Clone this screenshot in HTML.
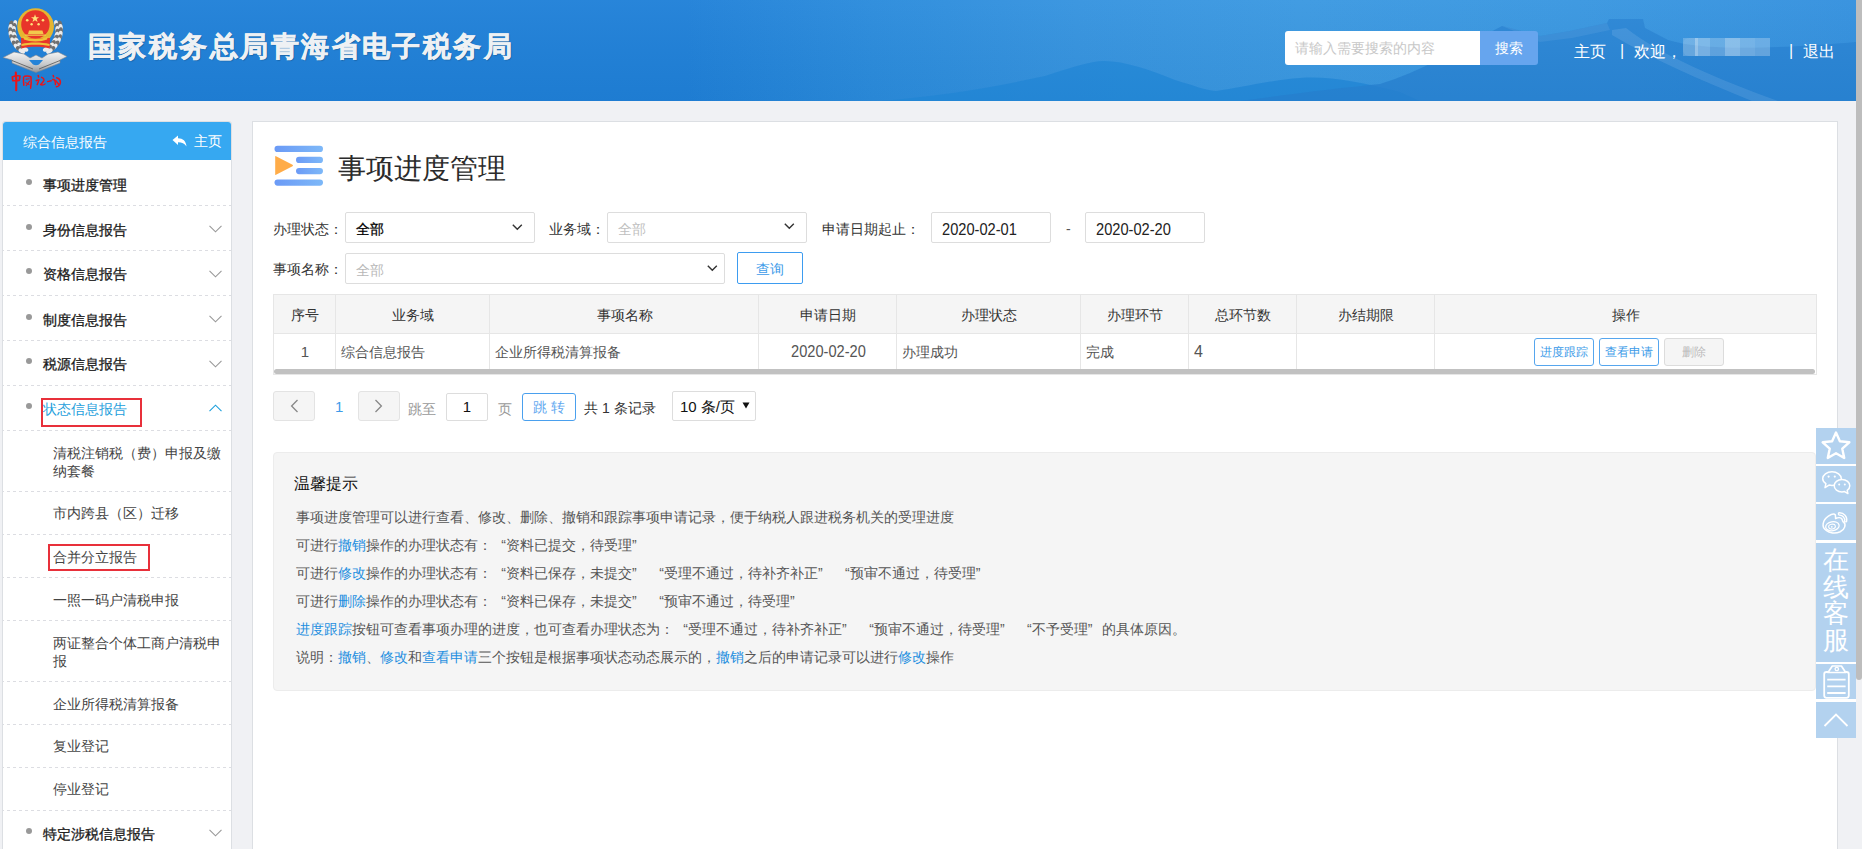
<!DOCTYPE html>
<html><head><meta charset="utf-8">
<style>
*{box-sizing:border-box;margin:0;padding:0}
html,body{width:1862px;height:849px;overflow:hidden;background:#f0f1f4;font-family:"Liberation Sans",sans-serif;font-size:14px;color:#333}
.a{position:absolute;white-space:nowrap}
#hdr{position:absolute;left:0;top:0;width:1856px;height:101px;overflow:hidden}
#title{left:88px;top:27px;font-size:28px;line-height:40px;font-weight:bold;color:#eef1f4;letter-spacing:2.45px;text-shadow:1px 1px 1px rgba(0,0,0,.22);-webkit-text-stroke:0.5px #eef1f4}
#search{left:1285px;top:31px;width:195px;height:34px;background:#fff;border-radius:3px 0 0 3px}
#search span{position:absolute;left:10px;top:9px;color:#c8c8c8;font-size:14px}
#sbtn{left:1480px;top:31px;width:58px;height:34px;background:#66a5ee;border-radius:0 3px 3px 0;color:#fff;font-size:14px;text-align:center;line-height:34px}
.nav{color:#fff;font-size:16px;top:41.5px}
#sb{position:absolute;left:2px;top:121px;width:230px;height:740px;background:#fff;border:1px solid #dcdfe3;border-radius:3px}
.sep{position:absolute;left:3px;width:228px;height:1px;background:repeating-linear-gradient(90deg,#dcdde2 0 3px,transparent 3px 6px);background-position:4px 0}
.dot{position:absolute;left:26px;width:6px;height:6px;border-radius:50%;background:#999}
.tl{left:43px;color:#1a1a1a;font-size:14px;line-height:20px;-webkit-text-stroke:0.3px #1a1a1a}
.sub{left:53px;color:#444;font-size:14px;line-height:18px}
.chev{position:absolute;left:207px;width:12px;height:7px}
#main{position:absolute;left:252px;top:121px;width:1586px;height:740px;background:#fff;border:1px solid #dcdfe3}
.lbl{color:#333;font-size:14px}
.sel{position:absolute;height:31px;border:1px solid #ddd;border-radius:2px;background:#fff}
.sel span{position:absolute;left:10px;top:8px;font-size:14px}
.num{display:inline-block;font-size:17px;transform:scaleX(0.86);transform-origin:0 50%}
.sel svg{position:absolute}
table{border-collapse:collapse;position:absolute;left:273px;top:294px;table-layout:fixed}
th,td{border:1px solid #e5e5e5;font-size:14px;font-weight:normal;white-space:nowrap;overflow:hidden}
th{background:#f5f5f5;height:39px;color:#333;text-align:center}
td{height:36px;color:#555;padding-left:5px}
.btn{position:absolute;height:28px;width:60px;border:1px solid #56a6ee;border-radius:3px;color:#3c9be8;font-size:12px;text-align:center;line-height:27px;background:#fff}
#tips{position:absolute;left:273px;top:452px;width:1543px;height:239px;background:#f5f5f5;border:1px solid #ececec;border-radius:4px}
.tp{position:absolute;left:22px;font-size:14px;color:#555}
.lk{color:#1f8fe0}
.ql{display:inline-block;width:14px;text-align:right}
.qr{display:inline-block;width:14px;text-align:left}
#tool{position:absolute;left:1816px;top:428px;width:40px;height:310px;background:#fff}
.tb{position:absolute;left:0;width:40px;background:#b3d2ef}
#scr{position:absolute;left:1856px;top:0;width:6px;height:849px;background:#f0f1f4}
#thumb{position:absolute;left:1856px;top:0;width:6px;height:680px;background:#bdbdbd;border-radius:0 0 3px 3px}
</style></head><body>
<div id="hdr"><svg width="1856" height="101" style="position:absolute;left:0;top:0">
<defs>
<linearGradient id="hg" x1="0" x2="1" y1="0" y2="0">
<stop offset="0" stop-color="#1f80d8"/><stop offset="0.37" stop-color="#1f80d8"/><stop offset="0.47" stop-color="#2a8bdc"/><stop offset="0.58" stop-color="#3593df"/><stop offset="0.70" stop-color="#3a98e1"/><stop offset="0.85" stop-color="#3896e0"/><stop offset="1" stop-color="#3390de"/>
</linearGradient>
<linearGradient id="hv" x1="0" x2="0" y1="0" y2="1"><stop offset="0" stop-color="#fff" stop-opacity="0.04"/><stop offset="1" stop-color="#000" stop-opacity="0.03"/></linearGradient>
</defs>
<rect width="1856" height="101" fill="url(#hg)"/>
<path d="M880 101 C940 96 990 88 1045 76 C1070 68 1090 61 1104 61 C1125 61 1150 70 1175 80 C1195 86 1205 90 1216 91 C1240 88 1270 80 1300 78 C1330 76 1360 82 1400 92 L1420 101 Z" fill="#2389da" opacity="0.9"/>
<path d="M1240 101 C1290 94 1340 88 1380 84 C1420 72 1460 48 1502 26 L1540 36 L1570 31 L1607 23 L1609 19 L1643 19 L1645 28 L1668 40 C1700 50 1760 50 1856 42 L1856 101 Z" fill="#2782d3" opacity="0.8"/>
<path d="M1612 30 L1626 28 C1660 55 1720 80 1778 101 L1752 101 C1700 80 1650 58 1612 35 Z" fill="#70b0e8" opacity="0.3"/>
<path d="M1502 26 L1540 36 L1570 31 L1607 23 L1610 30 L1572 38 L1540 42 Z" fill="#5aa2e2" opacity="0.3"/>
<rect width="1856" height="101" fill="url(#hv)"/>
</svg>
</div>
<svg class="a" style="left:0;top:0" width="72" height="96" viewBox="0 0 72 96">
<defs><linearGradient id="sil" x1="0" x2="0" y1="0" y2="1"><stop offset="0" stop-color="#f4f4f4"/><stop offset="0.6" stop-color="#c8cacc"/><stop offset="1" stop-color="#8f9398"/></linearGradient></defs>
<ellipse cx="14.8" cy="23.6" rx="3.6" ry="2.1" transform="rotate(-73 14.8 23.6)" fill="#ececec"/>
<ellipse cx="11.1" cy="24.1" rx="3.6" ry="2.1" transform="rotate(-76 11.1 24.1)" fill="#707070"/>
<ellipse cx="14.1" cy="26.5" rx="3.6" ry="2.1" transform="rotate(-81 14.1 26.5)" fill="#707070"/>
<ellipse cx="10.5" cy="27.5" rx="3.6" ry="2.1" transform="rotate(-84 10.5 27.5)" fill="#ececec"/>
<ellipse cx="13.8" cy="29.5" rx="3.6" ry="2.1" transform="rotate(-89 13.8 29.5)" fill="#ececec"/>
<ellipse cx="10.4" cy="30.9" rx="3.6" ry="2.1" transform="rotate(-92 10.4 30.9)" fill="#707070"/>
<ellipse cx="13.9" cy="32.4" rx="3.6" ry="2.1" transform="rotate(-96 13.9 32.4)" fill="#707070"/>
<ellipse cx="10.8" cy="34.3" rx="3.6" ry="2.1" transform="rotate(-100 10.8 34.3)" fill="#ececec"/>
<ellipse cx="14.5" cy="35.3" rx="3.6" ry="2.1" transform="rotate(-104 14.5 35.3)" fill="#ececec"/>
<ellipse cx="11.6" cy="37.7" rx="3.6" ry="2.1" transform="rotate(-108 11.6 37.7)" fill="#707070"/>
<ellipse cx="15.4" cy="38.2" rx="3.6" ry="2.1" transform="rotate(-112 15.4 38.2)" fill="#707070"/>
<ellipse cx="12.9" cy="40.8" rx="3.6" ry="2.1" transform="rotate(-116 12.9 40.8)" fill="#ececec"/>
<ellipse cx="16.7" cy="40.8" rx="3.6" ry="2.1" transform="rotate(-120 16.7 40.8)" fill="#ececec"/>
<ellipse cx="14.5" cy="43.8" rx="3.6" ry="2.1" transform="rotate(-123 14.5 43.8)" fill="#707070"/>
<ellipse cx="18.3" cy="43.3" rx="3.6" ry="2.1" transform="rotate(-128 18.3 43.3)" fill="#707070"/>
<ellipse cx="16.6" cy="46.6" rx="3.6" ry="2.1" transform="rotate(-131 16.6 46.6)" fill="#ececec"/>
<ellipse cx="20.3" cy="45.5" rx="3.6" ry="2.1" transform="rotate(-135 20.3 45.5)" fill="#ececec"/>
<ellipse cx="19.0" cy="49.0" rx="3.6" ry="2.1" transform="rotate(-139 19.0 49.0)" fill="#707070"/>
<ellipse cx="22.5" cy="47.5" rx="3.6" ry="2.1" transform="rotate(-143 22.5 47.5)" fill="#707070"/>
<ellipse cx="21.8" cy="51.1" rx="3.6" ry="2.1" transform="rotate(-147 21.8 51.1)" fill="#ececec"/>
<ellipse cx="25.0" cy="49.1" rx="3.6" ry="2.1" transform="rotate(-151 25.0 49.1)" fill="#ececec"/>
<ellipse cx="56.4" cy="23.6" rx="3.6" ry="2.1" transform="rotate(73 56.4 23.6)" fill="#ececec"/>
<ellipse cx="60.1" cy="24.1" rx="3.6" ry="2.1" transform="rotate(76 60.1 24.1)" fill="#707070"/>
<ellipse cx="57.1" cy="26.5" rx="3.6" ry="2.1" transform="rotate(81 57.1 26.5)" fill="#707070"/>
<ellipse cx="60.7" cy="27.5" rx="3.6" ry="2.1" transform="rotate(84 60.7 27.5)" fill="#ececec"/>
<ellipse cx="57.4" cy="29.5" rx="3.6" ry="2.1" transform="rotate(89 57.4 29.5)" fill="#ececec"/>
<ellipse cx="60.8" cy="30.9" rx="3.6" ry="2.1" transform="rotate(92 60.8 30.9)" fill="#707070"/>
<ellipse cx="57.3" cy="32.4" rx="3.6" ry="2.1" transform="rotate(96 57.3 32.4)" fill="#707070"/>
<ellipse cx="60.4" cy="34.3" rx="3.6" ry="2.1" transform="rotate(100 60.4 34.3)" fill="#ececec"/>
<ellipse cx="56.7" cy="35.3" rx="3.6" ry="2.1" transform="rotate(104 56.7 35.3)" fill="#ececec"/>
<ellipse cx="59.6" cy="37.7" rx="3.6" ry="2.1" transform="rotate(108 59.6 37.7)" fill="#707070"/>
<ellipse cx="55.8" cy="38.2" rx="3.6" ry="2.1" transform="rotate(112 55.8 38.2)" fill="#707070"/>
<ellipse cx="58.3" cy="40.8" rx="3.6" ry="2.1" transform="rotate(116 58.3 40.8)" fill="#ececec"/>
<ellipse cx="54.5" cy="40.8" rx="3.6" ry="2.1" transform="rotate(120 54.5 40.8)" fill="#ececec"/>
<ellipse cx="56.7" cy="43.8" rx="3.6" ry="2.1" transform="rotate(123 56.7 43.8)" fill="#707070"/>
<ellipse cx="52.9" cy="43.3" rx="3.6" ry="2.1" transform="rotate(128 52.9 43.3)" fill="#707070"/>
<ellipse cx="54.6" cy="46.6" rx="3.6" ry="2.1" transform="rotate(131 54.6 46.6)" fill="#ececec"/>
<ellipse cx="50.9" cy="45.5" rx="3.6" ry="2.1" transform="rotate(135 50.9 45.5)" fill="#ececec"/>
<ellipse cx="52.2" cy="49.0" rx="3.6" ry="2.1" transform="rotate(139 52.2 49.0)" fill="#707070"/>
<ellipse cx="48.7" cy="47.5" rx="3.6" ry="2.1" transform="rotate(143 48.7 47.5)" fill="#707070"/>
<ellipse cx="49.4" cy="51.1" rx="3.6" ry="2.1" transform="rotate(147 49.4 51.1)" fill="#ececec"/>
<ellipse cx="46.2" cy="49.1" rx="3.6" ry="2.1" transform="rotate(151 46.2 49.1)" fill="#ececec"/>
<path d="M3 57.5 L14 52 L24 54 L30 58 L36 55 L42 58 L48 54 L58 52 L67 56.5 L60 60 L60 63 L40 71 L36 72.5 L32 71 L12 63 L12 60 Z" fill="url(#sil)" stroke="#80858b" stroke-width="0.6"/>
<path d="M12 60.5 L33 69 M60 60.5 L39 69" stroke="#555" stroke-width="0.8"/>
<path d="M29 60 L43 60 L39 64.5 Q36 66 33 64.5 Z" fill="#2483d8"/>
<circle cx="35.6" cy="26.5" r="18.3" fill="#e5b530"/>
<path d="M21 38 L50 38 L49.7 48.6 C42 46 29 46 21.3 48.6 Z" fill="#e8352a"/>
<path d="M21.5 44 C29 42 42 42 49.5 44 L49.5 46 C42 44.2 29 44.2 21.5 46 Z" fill="#efc23a"/>
<circle cx="35.4" cy="24.5" r="14.2" fill="#e8352a"/>
<path d="M23 36.5 C29 39.5 42 39.5 48 36.5 L47 39.5 C41 42 30 42 24 39.5 Z" fill="#efc23a"/>
<path d="M35 14.3 l1.1 2.9 3 0.1 -2.4 1.8 0.9 2.9 -2.6 -1.7 -2.5 1.7 0.9 -2.9 -2.4 -1.8 3 -0.1 z" fill="#ffe27a"/>
<circle cx="27.2" cy="20.3" r="1.3" fill="#ffe27a"/><circle cx="43" cy="20.3" r="1.3" fill="#ffe27a"/>
<circle cx="31.6" cy="24.3" r="1.2" fill="#ffe27a"/><circle cx="38.6" cy="24.3" r="1.2" fill="#ffe27a"/>
<path d="M29 30.5 L42.4 30.5 L43.5 34 L28 34 Z" fill="#f2c94c"/>
<path d="M25 34.5 L46 34.5 L46 35.8 L25 35.8 Z" fill="#f2c94c"/>
<g fill="none" stroke="#e8141a" stroke-linecap="round" stroke-linejoin="round">
<path d="M12.3 77 Q16 75.2 20 76 L19.3 80.3 Q15.6 81 12.8 80.6 Z" stroke-width="1.7"/>
<path d="M15.8 72.5 Q16.6 81 16.2 90.2" stroke-width="2.1"/>
<path d="M23.6 77 Q23.2 81.5 23.8 85.2" stroke-width="1.5"/>
<path d="M24.6 76.2 Q28.5 75.4 31 77 Q31.6 82.5 30.6 88.2" stroke-width="1.5"/>
<path d="M26 79.2 L29.2 78.8 M25.8 82.6 L29 84.6 M26.2 85.6 L29.6 81.2" stroke-width="1.1"/>
<path d="M38.2 75.5 L38.6 77 M36.2 80.6 Q37.6 79.6 39 80 M37.2 84.6 Q38 82.5 38.4 81.5" stroke-width="1.5"/>
<path d="M41.6 77.4 Q44.6 78.6 43.8 80.6 Q42.4 83 40.6 84.6 Q42.6 85.6 45 84" stroke-width="1.5"/>
<path d="M47.6 81.6 L51.2 80.8" stroke-width="1.4"/>
<path d="M53.2 75.4 L53.6 76.8 M52.6 79.6 Q55.6 79 55.4 84.6" stroke-width="1.5"/>
<path d="M56.6 77.8 Q60.6 79 60.4 82.6 Q59.6 86.4 56.4 86.8 M55.8 80.6 L58.6 84.2" stroke-width="1.5"/>
</g>
</svg>
<div class="a" id="title">国家税务总局青海省电子税务局</div>
<div class="a" id="search"><span>请输入需要搜索的内容</span></div>
<div class="a" id="sbtn">搜索</div>
<div class="a nav" style="left:1574px">主页</div>
<div class="a nav" style="left:1620px">|</div>
<div class="a nav" style="left:1634px">欢迎，</div>
<div class="a" style="left:1683px;top:38px;width:15px;height:18px;background:rgba(255,255,255,0.22)"></div>
<div class="a" style="left:1695px;top:38px;width:15px;height:18px;background:rgba(255,255,255,0.30)"></div>
<div class="a" style="left:1710px;top:38px;width:15px;height:18px;background:rgba(255,255,255,0.18)"></div>
<div class="a" style="left:1725px;top:38px;width:15px;height:18px;background:rgba(255,255,255,0.36)"></div>
<div class="a" style="left:1740px;top:38px;width:15px;height:18px;background:rgba(255,255,255,0.25)"></div>
<div class="a" style="left:1755px;top:38px;width:15px;height:18px;background:rgba(255,255,255,0.20)"></div>
<div class="a" style="left:1683px;top:38px;width:87px;height:18px;background:rgba(255,255,255,0.08);border-radius:6px 0 0 6px"></div>
<div class="a nav" style="left:1789px">|</div>
<div class="a nav" style="left:1803px">退出</div>

<div id="sb"></div>
<div class="a" style="left:3px;top:122px;width:228px;height:38px;background:#36a8f1;border-radius:3px 3px 0 0"></div>
<div class="a" style="left:23px;top:132px;line-height:20px;color:#fff">综合信息报告</div>
<svg class="a" style="left:172px;top:135px" width="15" height="12" viewBox="0 0 15 12"><path d="M0.5 5 L6 0.5 L6 3.2 C11 3.2 14 6 14.5 11.5 C12.5 8.5 10 7.3 6 7.3 L6 10 Z" fill="#fff"/></svg>
<div class="a" style="left:194px;top:131px;line-height:20px;color:#fff">主页</div>
<div class="dot" style="top:179px"></div>
<div class="a tl" style="top:175px">事项进度管理</div>
<div class="sep" style="top:205px"></div>
<div class="dot" style="top:224px"></div>
<div class="a tl" style="top:220px">身份信息报告</div>
<div class="sep" style="top:250px"></div>
<svg class="a" style="left:209px;top:225px" width="13" height="8" viewBox="0 0 13 8"><path d="M0.5 0.8 L6.5 6.8 L12.5 0.8" fill="none" stroke="#999" stroke-width="1.1"/></svg>
<div class="dot" style="top:268px"></div>
<div class="a tl" style="top:264px">资格信息报告</div>
<div class="sep" style="top:295px"></div>
<svg class="a" style="left:209px;top:270px" width="13" height="8" viewBox="0 0 13 8"><path d="M0.5 0.8 L6.5 6.8 L12.5 0.8" fill="none" stroke="#999" stroke-width="1.1"/></svg>
<div class="dot" style="top:314px"></div>
<div class="a tl" style="top:310px">制度信息报告</div>
<div class="sep" style="top:340px"></div>
<svg class="a" style="left:209px;top:315px" width="13" height="8" viewBox="0 0 13 8"><path d="M0.5 0.8 L6.5 6.8 L12.5 0.8" fill="none" stroke="#999" stroke-width="1.1"/></svg>
<div class="dot" style="top:358px"></div>
<div class="a tl" style="top:354px">税源信息报告</div>
<div class="sep" style="top:385px"></div>
<svg class="a" style="left:209px;top:360px" width="13" height="8" viewBox="0 0 13 8"><path d="M0.5 0.8 L6.5 6.8 L12.5 0.8" fill="none" stroke="#999" stroke-width="1.1"/></svg>
<div class="dot" style="top:403px"></div>
<div class="a" style="left:43px;top:399px;line-height:20px;color:#1ea0dc">状态信息报告</div>
<svg class="a" style="left:209px;top:404px" width="13" height="8" viewBox="0 0 13 8"><path d="M0.5 7.2 L6.5 1.2 L12.5 7.2" fill="none" stroke="#1ea0dc" stroke-width="1.1"/></svg>
<div class="sep" style="top:430px"></div>
<div class="a" style="left:41px;top:398px;width:101px;height:29px;border:2px solid #e8303a"></div>
<div class="a sub" style="top:444px">清税注销税（费）申报及缴<br>纳套餐</div>
<div class="sep" style="top:491px"></div>
<div class="a sub" style="top:504px">市内跨县（区）迁移</div>
<div class="sep" style="top:534px"></div>
<div class="a sub" style="top:548px">合并分立报告</div>
<div class="sep" style="top:577px"></div>
<div class="a sub" style="top:591px">一照一码户清税申报</div>
<div class="sep" style="top:620px"></div>
<div class="a sub" style="top:634px">两证整合个体工商户清税申<br>报</div>
<div class="sep" style="top:681px"></div>
<div class="a sub" style="top:695px">企业所得税清算报备</div>
<div class="sep" style="top:724px"></div>
<div class="a sub" style="top:737px">复业登记</div>
<div class="sep" style="top:767px"></div>
<div class="a sub" style="top:780px">停业登记</div>
<div class="sep" style="top:810px"></div>
<div class="a" style="left:48px;top:544px;width:102px;height:27px;border:2px solid #e8303a"></div>
<div class="dot" style="top:828px"></div>
<div class="a tl" style="top:824px">特定涉税信息报告</div>
<svg class="a" style="left:209px;top:829px" width="13" height="8" viewBox="0 0 13 8"><path d="M0.5 0.8 L6.5 6.8 L12.5 0.8" fill="none" stroke="#999" stroke-width="1.1"/></svg>


<div id="main"></div>
<svg class="a" style="left:274px;top:145px" width="50" height="42" viewBox="0 0 50 42">
<defs><linearGradient id="bg1" x1="0" x2="1" y1="0" y2="0"><stop offset="0" stop-color="#6b9af6"/><stop offset="1" stop-color="#7db8f8"/></linearGradient></defs>
<rect x="0.5" y="0.8" width="48.5" height="6.2" rx="3.1" fill="url(#bg1)"/>
<rect x="22" y="11.8" width="27" height="6.2" rx="3.1" fill="url(#bg1)"/>
<rect x="22" y="23" width="27" height="6.2" rx="3.1" fill="url(#bg1)"/>
<rect x="0.5" y="34.5" width="48.5" height="6.2" rx="3.1" fill="url(#bg1)"/>
<path d="M1.2 11.5 Q1 10.8 2 11.3 L18.5 19.8 Q19.6 20.5 18.5 21.2 L2 29.8 Q1 30.3 1.2 29.5 Z" fill="#ffac48"/>
</svg>
<div class="a" style="left:338px;top:149px;font-size:28px;line-height:40px;color:#2b2b2b">事项进度管理</div>

<div class="a lbl" style="left:273px;top:219px;line-height:20px">办理状态：</div>
<div class="sel" style="left:345px;top:212px;width:190px"><span style="color:#000;-webkit-text-stroke:0.25px #000">全部</span><svg style="left:166px;top:11px" width="11" height="7" viewBox="0 0 11 7"><path d="M0.8 0.8 L5.3 5.2 L9.8 0.8" fill="none" stroke="#333" stroke-width="1.4"/></svg></div>
<div class="a lbl" style="left:549px;top:219px;line-height:20px">业务域：</div>
<div class="sel" style="left:607px;top:212px;width:200px"><span style="color:#c0c0c0">全部</span><svg style="left:176px;top:10px" width="11" height="7" viewBox="0 0 11 7"><path d="M0.8 0.8 L5.3 5.2 L9.8 0.8" fill="none" stroke="#333" stroke-width="1.4"/></svg></div>
<div class="a lbl" style="left:822px;top:219px;line-height:20px">申请日期起止：</div>
<div class="sel" style="left:931px;top:212px;width:120px"><span style="color:#222;top:7px;line-height:20px"><b class="num" style="font-weight:normal">2020-02-01</b></span></div>
<div class="a" style="left:1066px;top:219px;line-height:20px;color:#555">-</div>
<div class="sel" style="left:1085px;top:212px;width:120px"><span style="color:#222;top:7px;line-height:20px"><b class="num" style="font-weight:normal">2020-02-20</b></span></div>

<div class="a lbl" style="left:273px;top:259px;line-height:20px">事项名称：</div>
<div class="sel" style="left:345px;top:253px;width:380px"><span style="color:#b8b8b8">全部</span><svg style="left:361px;top:11px" width="11" height="7" viewBox="0 0 11 7"><path d="M0.8 0.8 L5.3 5.2 L9.8 0.8" fill="none" stroke="#333" stroke-width="1.4"/></svg></div>
<div class="a" style="left:737px;top:252px;width:66px;height:32px;border:1px solid #3d9cf0;border-radius:2px;color:#3d9be9;text-align:center;line-height:32px">查询</div>

<div class="a" style="left:273px;top:294px;width:1544px;height:81px;border:1px solid #e6e6e6;background:#fff"></div>
<div class="a" style="left:274px;top:295px;width:1542px;height:38px;background:#f5f5f5"></div>
<div class="a" style="left:274px;top:333px;width:1542px;height:1px;background:#e6e6e6"></div>
<div class="a" style="left:335px;top:295px;width:1px;height:74px;background:#e6e6e6"></div>
<div class="a" style="left:489px;top:295px;width:1px;height:74px;background:#e6e6e6"></div>
<div class="a" style="left:758px;top:295px;width:1px;height:74px;background:#e6e6e6"></div>
<div class="a" style="left:896px;top:295px;width:1px;height:74px;background:#e6e6e6"></div>
<div class="a" style="left:1080px;top:295px;width:1px;height:74px;background:#e6e6e6"></div>
<div class="a" style="left:1188px;top:295px;width:1px;height:74px;background:#e6e6e6"></div>
<div class="a" style="left:1296px;top:295px;width:1px;height:74px;background:#e6e6e6"></div>
<div class="a" style="left:1434px;top:295px;width:1px;height:74px;background:#e6e6e6"></div>
<div class="a" style="left:274px;top:369px;width:1541px;height:5px;background:#c1c1c1;border-radius:3px"></div>
<div class="a" style="left:274px;top:305px;width:62px;text-align:center;line-height:20px;color:#333">序号</div>
<div class="a" style="left:336px;top:305px;width:154px;text-align:center;line-height:20px;color:#333">业务域</div>
<div class="a" style="left:490px;top:305px;width:269px;text-align:center;line-height:20px;color:#333">事项名称</div>
<div class="a" style="left:759px;top:305px;width:138px;text-align:center;line-height:20px;color:#333">申请日期</div>
<div class="a" style="left:897px;top:305px;width:184px;text-align:center;line-height:20px;color:#333">办理状态</div>
<div class="a" style="left:1081px;top:305px;width:108px;text-align:center;line-height:20px;color:#333">办理环节</div>
<div class="a" style="left:1189px;top:305px;width:108px;text-align:center;line-height:20px;color:#333">总环节数</div>
<div class="a" style="left:1297px;top:305px;width:138px;text-align:center;line-height:20px;color:#333">办结期限</div>
<div class="a" style="left:1435px;top:305px;width:382px;text-align:center;line-height:20px;color:#333">操作</div>
<div class="a" style="left:274px;top:342px;width:62px;text-align:center;line-height:20px;color:#555;font-size:15px">1</div>
<div class="a" style="left:341px;top:342px;line-height:20px;color:#555">综合信息报告</div>
<div class="a" style="left:495px;top:342px;line-height:20px;color:#555">企业所得税清算报备</div>
<div class="a" style="left:791px;top:342px;line-height:20px;color:#555"><span class="num">2020-02-20</span></div>
<div class="a" style="left:902px;top:342px;line-height:20px;color:#555">办理成功</div>
<div class="a" style="left:1086px;top:342px;line-height:20px;color:#555">完成</div>
<div class="a" style="left:1194px;top:342px;line-height:20px;color:#555;font-size:16px">4</div>
<div class="btn" style="left:1534px;top:338px">进度跟踪</div>
<div class="btn" style="left:1599px;top:338px">查看申请</div>
<div class="btn" style="left:1664px;top:338px;border-color:#dcdcdc;background:#f5f5f5;color:#bbb">删除</div>
<div class="a" style="left:273px;top:391px;width:42px;height:30px;background:#f5f5f5;border:1px solid #e3e3e3;border-radius:3px"></div>
<svg class="a" style="left:290px;top:399px" width="9" height="14" viewBox="0 0 9 14"><path d="M7.5 1 L1.6 7 L7.5 13" fill="none" stroke="#888" stroke-width="1.3"/></svg>
<div class="a" style="left:335px;top:397px;line-height:20px;color:#3d9be9;font-size:15px">1</div>
<div class="a" style="left:358px;top:391px;width:42px;height:30px;background:#f5f5f5;border:1px solid #e3e3e3;border-radius:3px"></div>
<svg class="a" style="left:374px;top:399px" width="9" height="14" viewBox="0 0 9 14"><path d="M1.5 1 L7.4 7 L1.5 13" fill="none" stroke="#888" stroke-width="1.3"/></svg>
<div class="a" style="left:408px;top:399px;line-height:20px;color:#999">跳至</div>
<div class="a" style="left:446px;top:393px;width:42px;height:28px;border:1px solid #ddd;border-radius:2px;background:#fff;text-align:center;line-height:26px;color:#111;font-size:15px">1</div>
<div class="a" style="left:498px;top:399px;line-height:20px;color:#999">页</div>
<div class="a" style="left:522px;top:393px;width:54px;height:28px;border:1px solid #4aa0ee;border-radius:3px;text-align:center;line-height:26px;color:#64a9ef;font-size:14px">跳 转</div>
<div class="a" style="left:584px;top:398px;line-height:20px;color:#333">共 1 条记录</div>
<div class="a" style="left:672px;top:391px;width:84px;height:30px;border:1px solid #ddd;border-radius:2px;background:#fff"></div>
<div class="a" style="left:680px;top:397px;line-height:20px;color:#111;font-size:15px">10 条/页</div>
<svg class="a" style="left:742px;top:402px" width="8" height="7" viewBox="0 0 8 7"><path d="M0.5 0.5 L7.5 0.5 L4 6.5 Z" fill="#111"/></svg>
<div id="tips"></div>
<div class="a" style="left:294px;top:473px;font-size:16px;line-height:22px;color:#111">温馨提示</div>
<div class="a" style="left:296px;top:507px;line-height:20px;color:#555">事项进度管理可以进行查看、修改、删除、撤销和跟踪事项申请记录，便于纳税人跟进税务机关的受理进度</div>
<div class="a" style="left:296px;top:535px;line-height:20px;color:#555">可进行<span class="lk">撤销</span>操作的办理状态有：<span class="ql">“</span>资料已提交，待受理<span class="qr">”</span></div>
<div class="a" style="left:296px;top:563px;line-height:20px;color:#555">可进行<span class="lk">修改</span>操作的办理状态有：<span class="ql">“</span>资料已保存，未提交<span class="qr">”</span> <span class="ql">“</span>受理不通过，待补齐补正<span class="qr">”</span> <span class="ql">“</span>预审不通过，待受理<span class="qr">”</span></div>
<div class="a" style="left:296px;top:591px;line-height:20px;color:#555">可进行<span class="lk">删除</span>操作的办理状态有：<span class="ql">“</span>资料已保存，未提交<span class="qr">”</span> <span class="ql">“</span>预审不通过，待受理<span class="qr">”</span></div>
<div class="a" style="left:296px;top:619px;line-height:20px;color:#555"><span class="lk">进度跟踪</span>按钮可查看事项办理的进度，也可查看办理状态为：<span class="ql">“</span>受理不通过，待补齐补正<span class="qr">”</span> <span class="ql">“</span>预审不通过，待受理<span class="qr">”</span> <span class="ql">“</span>不予受理<span class="qr">”</span>的具体原因。</div>
<div class="a" style="left:296px;top:647px;line-height:20px;color:#555">说明：<span class="lk">撤销</span>、<span class="lk">修改</span>和<span class="lk">查看申请</span>三个按钮是根据事项状态动态展示的，<span class="lk">撤销</span>之后的申请记录可以进行<span class="lk">修改</span>操作</div>


<div id="tool">
<div class="tb" style="top:0;height:36px"><svg style="position:absolute;left:5px;top:2.5px" width="30" height="30" viewBox="0 0 30 30"><path d="M15.00 1.60 L18.88 10.26 L28.31 11.27 L21.28 17.64 L23.23 26.93 L15.00 22.20 L6.77 26.93 L8.72 17.64 L1.69 11.27 L11.12 10.26 Z" fill="none" stroke="#fff" stroke-width="2.4" stroke-linejoin="round"/></svg></div>
<div class="tb" style="top:38px;height:36px"><svg style="position:absolute;left:5px;top:5px" width="30" height="26" viewBox="0 0 30 26">
<path d="M11 0.8 C16.2 0.8 20.3 3.9 20.3 7.6 C20.3 11.4 16.2 14.5 11 14.5 C9.9 14.5 8.9 14.3 8 14.1 L4 16.6 L4.9 12.7 C2.9 11.5 1.7 9.6 1.7 7.6 C1.7 3.9 5.8 0.8 11 0.8 Z" fill="none" stroke="#fff" stroke-width="1.5" stroke-linejoin="round"/>
<circle cx="7.6" cy="5.6" r="1.1" fill="#fff"/><circle cx="13.8" cy="5.6" r="1.1" fill="#fff"/>
<path d="M21 8.6 C25.4 8.6 28.8 11.4 28.8 14.8 C28.8 16.6 27.8 18.3 26.2 19.4 L26.9 22.6 L23.6 20.6 C22.8 20.8 21.9 21 21 21 C16.6 21 13.2 18.2 13.2 14.8 C13.2 11.4 16.6 8.6 21 8.6 Z" fill="#b3d2ef" stroke="#fff" stroke-width="1.5" stroke-linejoin="round"/>
<circle cx="18.2" cy="13.6" r="1" fill="#fff"/><circle cx="23.8" cy="13.6" r="1" fill="#fff"/>
</svg></div>
<div class="tb" style="top:76px;height:36px"><svg style="position:absolute;left:0;top:0" width="40" height="36" viewBox="1816 504 40 36">
<path d="M1826.2 530.4 C1821.2 527.4 1822.4 520.2 1828.4 516.2 C1831.4 514.2 1834.4 513.6 1835.4 515 L1835.6 518.6 C1838.2 517.2 1841 517.4 1842 519.2 C1842.8 520.8 1842.6 521.6 1843.6 522.2 C1846.2 524.2 1845.2 529.4 1840.2 531.8 C1835.2 534 1829.4 533.2 1826.2 530.4 Z" fill="none" stroke="#fff" stroke-width="1.5" stroke-linejoin="round"/>
<path d="M1838.6 512.8 C1843.8 512.2 1847.8 517 1846.6 521.6 C1845.6 522 1845 521.8 1844.6 521.4 C1845.4 518 1842.6 515 1839.4 515.2 C1838.4 514.8 1838.2 513.4 1838.6 512.8 Z" fill="none" stroke="#fff" stroke-width="1.3" stroke-linejoin="round"/>
<ellipse cx="1832.4" cy="526.2" rx="6.8" ry="4.5" transform="rotate(-10 1832.4 526.2)" fill="none" stroke="#fff" stroke-width="1.3"/>
<ellipse cx="1832" cy="526.6" rx="3.4" ry="2.4" transform="rotate(-10 1832 526.6)" fill="none" stroke="#fff" stroke-width="1.1"/>
<circle cx="1831.8" cy="526.8" r="0.9" fill="#fff"/>
</svg></div>
<div class="tb" style="top:115px;height:119px"><div style="position:absolute;left:0;top:4px;width:40px;text-align:center;color:#fff;font-size:26px;line-height:26.5px;white-space:normal">在<br>线<br>客<br>服</div></div>
<div class="tb" style="top:236px;height:35px"><svg style="position:absolute;left:7px;top:1px" width="27" height="34" viewBox="0 0 27 34">
<rect x="1.2" y="7" width="24.6" height="25.8" rx="2.2" fill="none" stroke="#fff" stroke-width="1.8"/>
<path d="M5 7.5 L9.3 1 L18.4 1 L22.7 7.5 Z" fill="#b3d2ef" stroke="#fff" stroke-width="1.7" stroke-linejoin="round"/>
<circle cx="13.8" cy="4" r="1.7" fill="#b3d2ef" stroke="#fff" stroke-width="1.3"/>
<path d="M4.2 14.6 H22.6 M4.2 21.3 H22.6 M4.2 28 H22.6" stroke="#fff" stroke-width="1.8"/>
</svg></div>
<div class="tb" style="top:274px;height:36px"><svg style="position:absolute;left:7px;top:10px" width="26" height="16" viewBox="0 0 26 16"><path d="M1.5 14 L13 2.5 L24.5 14" fill="none" stroke="#fff" stroke-width="1.8"/></svg></div>
</div>
<div id="scr"></div><div id="thumb"></div>
</body></html>
